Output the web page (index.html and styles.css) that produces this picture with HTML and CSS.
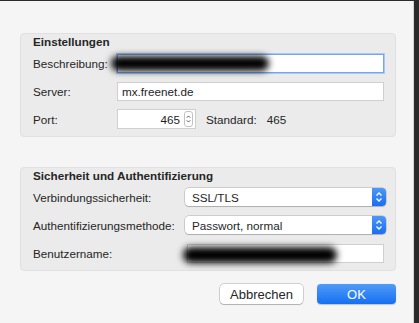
FILE: index.html
```html
<!DOCTYPE html>
<html lang="de">
<head>
    <meta charset="UTF-8">
    <title>Server-Einstellungen</title>
    <link rel="stylesheet" href="styles.css">
</head>
<body>
    <div class="sheet">
        <div class="group first">
            <div class="group-title">Einstellungen</div>
            <div class="row">
                <span class="label">Beschreibung:</span>
                <div class="field focused">
                    <span class="redact redact-desc"></span>
                </div>
            </div>
            <div class="row">
                <span class="label">Server:</span>
                <div class="field">mx.freenet.de</div>
            </div>
            <div class="row">
                <span class="label">Port:</span>
                <div class="field port">
                    <span class="port-value">465</span>
                    <span class="stepper">
                        <svg width="8" height="14" viewBox="0 0 8 14">
                            <path d="M2 5.5 L4 3.5 L6 5.5 M2 8.5 L4 10.5 L6 8.5" fill="none" stroke="#444" stroke-width="1"/>
                        </svg>
                    </span>
                </div>
                <span class="standard">Standard:</span>
                <span class="standard-value">465</span>
            </div>
        </div>

        <div class="group second">
            <div class="group-title">Sicherheit und Authentifizierung</div>
            <div class="row">
                <span class="label">Verbindungssicherheit:</span>
                <div class="popup">
                    <span class="popup-text">SSL/TLS</span>
                    <span class="popup-cap">
                        <svg width="8" height="14" viewBox="0 0 8 14">
                            <path d="M1.5 5.5 L4 3 L6.5 5.5 M1.5 8.5 L4 11 L6.5 8.5" fill="none" stroke="#fff" stroke-width="1.3"/>
                        </svg>
                    </span>
                </div>
            </div>
            <div class="row">
                <span class="label">Authentifizierungsmethode:</span>
                <div class="popup">
                    <span class="popup-text">Passwort, normal</span>
                    <span class="popup-cap">
                        <svg width="8" height="14" viewBox="0 0 8 14">
                            <path d="M1.5 5.5 L4 3 L6.5 5.5 M1.5 8.5 L4 11 L6.5 8.5" fill="none" stroke="#fff" stroke-width="1.3"/>
                        </svg>
                    </span>
                </div>
            </div>
            <div class="row">
                <span class="label">Benutzername:</span>
                <div class="field user">
                    <span class="redact redact-user"></span>
                </div>
            </div>
        </div>

        <div class="buttons">
            <button class="btn cancel">Abbrechen</button>
            <button class="btn ok">OK</button>
        </div>
    </div>
</body>
</html>
```

FILE: styles.css
```css
body {
    margin: 0;
    background: #2b2b2b;
    font-family: "Liberation Sans", Arial, sans-serif;
    font-size: 11.7px;
    color: #262626;
}
.sheet {
    margin-top: 1px;
    width: 414px;
    height: 322px;
    box-sizing: border-box;
    background: #f5f5f5;
    border-right: 1px solid #d6d6d6;
    padding: 32px 17px 0 20px;
}
.group {
    background: #ebebeb;
    border: 1px solid #e0e0e0;
    border-radius: 4px;
    padding: 0 11px 3px 12px;
}
.second {
    margin-top: 30px;
}
.group-title {
    height: 15px;
    line-height: 15px;
    font-weight: bold;
}
.row {
    height: 28px;
    display: flex;
    align-items: center;
}
.first .label {
    width: 84px;
    flex-shrink: 0;
}
.second .label {
    width: 152px;
    flex-shrink: 0;
}
.field {
    position: relative;
    flex: 1;
    height: 19px;
    box-sizing: border-box;
    background: #fff;
    border: 1px solid #cfcfcf;
    padding-left: 4px;
    line-height: 17px;
    color: #1e1e1e;
}
.field.focused {
    border-color: #76a6ee;
    box-shadow: 0 0 0 1px #a9c8f3;
}
.field.user {
    margin-left: 2px;
}
.field.port {
    flex: none;
    width: 79px;
    height: 20px;
    display: flex;
    align-items: center;
    justify-content: flex-end;
    padding-right: 2px;
}
.port-value {
    margin-right: 4px;
}
.stepper {
    width: 9px;
    height: 16px;
    box-sizing: border-box;
    border: 1px solid #c2c2c2;
    border-radius: 3px;
    display: flex;
    align-items: center;
    justify-content: center;
}
.standard {
    margin-left: 10px;
}
.standard-value {
    margin-left: 10px;
}
.redact {
    position: absolute;
    background: #000;
    border-radius: 10px;
    filter: blur(3.5px);
}
.redact-desc {
    left: -7px;
    top: 1px;
    width: 158px;
    height: 15px;
}
.redact-user {
    left: -5px;
    top: 2px;
    width: 154px;
    height: 16px;
}
.popup {
    flex: 1;
    height: 18px;
    margin-right: -2px;
    display: flex;
    align-items: center;
    background: #fff;
    border-radius: 4px;
    box-shadow: 0 0 0 0.5px rgba(0,0,0,0.25), 0 1px 1px rgba(0,0,0,0.15);
    overflow: hidden;
}
.popup-text {
    flex: 1;
    padding-left: 7px;
}
.popup-cap {
    width: 14px;
    height: 18px;
    display: flex;
    align-items: center;
    justify-content: center;
    background: linear-gradient(#4c97f8, #1a6ef0);
}
.buttons {
    margin-top: 13px;
    display: flex;
    justify-content: flex-end;
    gap: 14px;
}
.btn {
    height: 20px;
    border-radius: 4px;
    font-family: "Liberation Sans", Arial, sans-serif;
    font-size: 13px;
    padding: 0;
}
.cancel {
    width: 83px;
    background: #fff;
    color: #262626;
    border: none;
    box-shadow: 0 0 0 0.5px rgba(0,0,0,0.3), 0 1px 1px rgba(0,0,0,0.15);
}
.ok {
    width: 79px;
    color: #fff;
    border: none;
    background: linear-gradient(#509bf8, #1570f0);
    box-shadow: 0 0.5px 1px rgba(0,0,0,0.2);
}
```
